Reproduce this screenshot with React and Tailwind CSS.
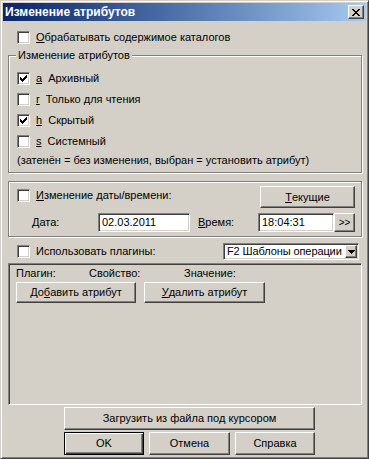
import React from "react";

const raised =
  "border border-t-white border-l-white border-r-[#404040] border-b-[#404040] shadow-[inset_-1px_-1px_#808080]";
const sunken =
  "border border-t-[#808080] border-l-[#808080] border-r-white border-b-white shadow-[inset_1px_1px_#404040,inset_-1px_-1px_#D4D0C8]";
const etched = "border border-[#808080] shadow-[inset_1px_1px_#fff,1px_1px_#fff]";

const Check = ({ checked }) => (
  <span className={`w-[13px] h-[13px] shrink-0 bg-white flex items-center justify-center ${sunken}`}>
    {checked && (
      <svg width="7" height="7" viewBox="0 0 7 7" shapeRendering="crispEdges">
        <path
          d="M6 0h1v1h-1z M5 1h2v1h-2z M0 2h1v1h-1z M4 2h3v1h-3z M0 3h2v1h-2z M3 3h3v1h-3z M0 4h5v1h-5z M1 5h3v1h-3z M2 6h1v1h-1z"
          fill="#000"
        />
      </svg>
    )}
  </span>
);

const Button = ({ className = "", children }) => (
  <button className={`flex items-center justify-center bg-[#D4D0C8] text-black font-normal ${raised} ${className}`}>
    {children}
  </button>
);

const CheckRow = ({ checked, className = "", children }) => (
  <label className={`flex items-center h-[13px] ${className}`}>
    <Check checked={checked} />
    <span className="ml-[6px] whitespace-pre leading-[13px]">{children}</span>
  </label>
);

export default function App() {
  return (
    <div className="w-[369px] h-[459px] bg-[#D4D0C8] p-[2px] border border-t-[#D4D0C8] border-l-[#D4D0C8] border-r-[#404040] border-b-[#404040] shadow-[inset_1px_1px_#fff,inset_-1px_-1px_#808080] font-['Liberation_Sans',Arial,sans-serif] text-[11px] text-black flex flex-col">
      {/* title bar */}
      <div className="h-[18px] shrink-0 flex items-center bg-linear-to-r from-[#0A246A] to-[#A6CAF0] pl-[2px] pr-[2px]">
        <span className="text-white font-bold text-[12px] leading-none">Изменение атрибутов</span>
        <button className={`ml-auto w-[16px] h-[14px] bg-[#D4D0C8] flex items-center justify-center ${raised}`}>
          <svg width="8" height="7" viewBox="0 0 8 7" shapeRendering="crispEdges">
            <path
              d="M0 0h2v1h-2z M6 0h2v1h-2z M1 1h2v1h-2z M5 1h2v1h-2z M2 2h4v1h-4z M3 3h2v1h-2z M2 4h4v1h-4z M1 5h2v1h-2z M5 5h2v1h-2z M0 6h2v1h-2z M6 6h2v1h-2z"
              fill="#000"
            />
          </svg>
        </button>
      </div>

      <div className="flex flex-col pl-[5px]">
        <CheckRow className="mt-[10px] ml-[9px]">
          <u>О</u>брабатывать содержимое каталогов
        </CheckRow>

        {/* attributes group */}
        <div className={`relative mt-[11px] w-[354px] h-[118px] flex flex-col pl-[8px] ${etched}`}>
          <span className="absolute -top-[7px] left-[7px] px-[2px] bg-[#D4D0C8] leading-[13px]">Изменение атрибутов</span>
          <div className="mt-[16px] flex flex-col gap-[8px]">
            <CheckRow checked><u>a</u>  Архивный</CheckRow>
            <CheckRow><u>r</u>  Только для чтения</CheckRow>
            <CheckRow checked><u>h</u>  Скрытый</CheckRow>
            <CheckRow><u>s</u>  Системный</CheckRow>
          </div>
          <span className="mt-[6px] leading-[13px]">(затенён = без изменения, выбран = установить атрибут)</span>
        </div>

        {/* date / time */}
        <div className={`mt-[8px] w-[354px] h-[56px] flex flex-col pl-[8px] pr-[6px] ${etched}`}>
          <div className="mt-[4px] h-[22px] flex items-start">
            <CheckRow className="mt-[3px]">
              <u>И</u>зменение даты/времени:
            </CheckRow>
            <Button className="ml-auto w-[95px] h-[22px]">
              <u>Т</u>екущие
            </Button>
          </div>
          <div className="mt-[5px] h-[19px] flex items-center">
            <span className="ml-[15px] w-[66px]">
              <u>Д</u>ата:
            </span>
            <div className={`w-[92px] h-[19px] bg-white flex items-center pl-[3px] ${sunken}`}>02.03.2011</div>
            <span className="ml-[8px] w-[60px]">
              <u>В</u>ремя:
            </span>
            <div className={`w-[76px] h-[19px] bg-white flex items-center pl-[3px] ${sunken}`}>18:04:31</div>
            <Button className="w-[21px] h-[19px] text-[10px]">&gt;&gt;</Button>
          </div>
        </div>

        {/* plugins */}
        <div className="mt-[6px] w-[354px] h-[17px] flex items-center">
          <CheckRow className="ml-[9px]">Использовать плагины:</CheckRow>
          <div className={`ml-auto mr-[3px] w-[136px] h-[17px] bg-white flex items-center pl-[3px] pr-[1px] ${sunken}`}>
            <span className="flex-1 whitespace-nowrap overflow-hidden tracking-[-0.1px]">F2 Шаблоны операции</span>
            <Button className="w-[12px] h-[13px] shrink-0">
              <svg width="7" height="4" viewBox="0 0 7 4" shapeRendering="crispEdges">
                <path d="M0 0h7v1h-7z M1 1h5v1h-5z M2 2h3v1h-3z M3 3h1v1h-1z" fill="#000" />
              </svg>
            </Button>
          </div>
        </div>

        <div className={`mt-[3px] w-[354px] h-[142px] flex flex-col pl-[7px] ${sunken} shadow-[inset_1px_1px_#404040]`}>
          <div className="mt-[3px] h-[13px] flex items-center leading-[13px]">
            <span className="w-[73px]">Плагин:</span>
            <span className="w-[95px]">Свойство:</span>
            <span>Значение:</span>
          </div>
          <div className="mt-[2px] flex gap-[8px]">
            <Button className="w-[120px] h-[21px]">
              До<u>б</u>авить атрибут
            </Button>
            <Button className="w-[121px] h-[21px]">
              <u>У</u>далить атрибут
            </Button>
          </div>
        </div>

        <Button className="mt-[2px] ml-[56px] w-[251px] h-[23px]">Загрузить из файла под курсором</Button>

        <div className="mt-[2px] ml-[56px] flex gap-[5px]">
          <button className="w-[80px] h-[23px] bg-[#D4D0C8] font-normal border border-black shadow-[inset_1px_1px_#fff,inset_-1px_-1px_#404040,inset_-2px_-2px_#808080] flex items-center justify-center">
            OK
          </button>
          <Button className="w-[81px] h-[23px]">Отмена</Button>
          <Button className="w-[80px] h-[23px]">Справка</Button>
        </div>
      </div>
    </div>
  );
}
